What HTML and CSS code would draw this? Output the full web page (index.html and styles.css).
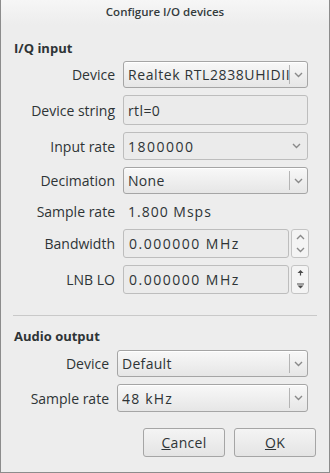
FILE: index.html
```html
<!DOCTYPE html>
<html>
<head>
<meta charset="utf-8">
<link rel="stylesheet" href="styles.css">
</head>
<body>
<div class="window">
  <div class="titlebar">Configure I/O devices</div>
  <div class="content">
    <div class="section-title">I/Q input</div>
    <div class="form iq">
      <label class="lbl">Device</label>
      <div class="combo h27"><span class="val wide">Realtek RTL2838UHIDII</span><span class="sep"></span><span class="arrow"><svg width="9" height="6" viewBox="0 0 9 6"><path d="M1 1 L4.5 4.5 L8 1" fill="none" stroke="#8a8a8a" stroke-width="1.4"/></svg></span></div>

      <label class="lbl">Device string</label>
      <div class="entry h30">rtl=0</div>

      <label class="lbl">Input rate</label>
      <div class="entry combo-edit h28"><span class="val digits">1800000</span><span class="arrow"><svg width="9" height="6" viewBox="0 0 9 6"><path d="M1 1 L4.5 4.5 L8 1" fill="none" stroke="#8a8a8a" stroke-width="1.4"/></svg></span></div>

      <label class="lbl">Decimation</label>
      <div class="combo h27"><span class="val">None</span><span class="sep"></span><span class="arrow"><svg width="9" height="6" viewBox="0 0 9 6"><path d="M1 1 L4.5 4.5 L8 1" fill="none" stroke="#8a8a8a" stroke-width="1.4"/></svg></span></div>

      <label class="lbl">Sample rate</label>
      <div class="plain">1.800 Msps</div>

      <label class="lbl">Bandwidth</label>
      <div class="spin h29"><div class="spin-entry digits">0.000000 MHz</div><div class="spin-btns"><span><svg width="9" height="6" viewBox="0 0 9 6"><path d="M1 5 L4.5 1.5 L8 5" fill="none" stroke="#8a8a8a" stroke-width="1.4"/></svg></span><span><svg width="9" height="6" viewBox="0 0 9 6"><path d="M1 1 L4.5 4.5 L8 1" fill="none" stroke="#8a8a8a" stroke-width="1.4"/></svg></span></div></div>

      <label class="lbl">LNB LO</label>
      <div class="spin h29"><div class="spin-entry digits">0.000000 MHz</div><div class="spin-btns"><span><svg width="9" height="7" viewBox="0 0 9 7"><path d="M1.5 4 L4.5 1 L7.5 4 Z" fill="#4a4a4a"/><path d="M4.5 2 V6.5" stroke="#4a4a4a" stroke-width="1.2"/></svg></span><span><svg width="9" height="7" viewBox="0 0 9 7"><path d="M1.5 2.5 L4.5 5.5 L7.5 2.5 Z" fill="#4a4a4a"/><path d="M1 1 H8" stroke="#4a4a4a" stroke-width="1"/></svg></span></div></div>
    </div>

    <div class="separator"></div>

    <div class="section-title">Audio output</div>
    <div class="form audio">
      <label class="lbl">Device</label>
      <div class="combo h27"><span class="val">Default</span><span class="sep"></span><span class="arrow"><svg width="9" height="6" viewBox="0 0 9 6"><path d="M1 1 L4.5 4.5 L8 1" fill="none" stroke="#8a8a8a" stroke-width="1.4"/></svg></span></div>

      <label class="lbl">Sample rate</label>
      <div class="combo h28"><span class="val digits">48 kHz</span><span class="sep"></span><span class="arrow"><svg width="9" height="6" viewBox="0 0 9 6"><path d="M1 1 L4.5 4.5 L8 1" fill="none" stroke="#8a8a8a" stroke-width="1.4"/></svg></span></div>
    </div>

    <div class="buttons">
      <button class="btn"><u>C</u>ancel</button>
      <button class="btn"><u>O</u>K</button>
    </div>
  </div>
</div>
</body>
</html>
```

FILE: styles.css
```css
* { box-sizing: border-box; }
html, body { margin: 0; padding: 0; }
body {
  width: 330px;
  height: 473px;
  font-family: "Open Sans", "DejaVu Sans", sans-serif;
  font-size: 14px;
  color: #2e3436;
  background: #ededed;
}
.window {
  width: 330px;
  height: 473px;
  border: 1px solid #8c8c8c;
  border-top: none;
  background: #ededed;
  display: flex;
  flex-direction: column;
}
.titlebar {
  height: 25px;
  background: linear-gradient(#f6f6f6, #ededed);
  text-align: center;
  font-size: 11.5px;
  font-weight: 600;
  line-height: 24px;
  color: #343b3d;
}
.content {
  padding: 14px 12px 0 12px;
  display: flex;
  flex-direction: column;
}
.section-title {
  font-weight: 700;
  font-size: 13px;
  line-height: 18px;
  padding-left: 1px;
}
.form {
  display: grid;
  column-gap: 8px;
  row-gap: 7px;
  align-items: center;
}
.form.iq {
  grid-template-columns: 102px 185px;
  margin-top: 4px;
}
.form.audio {
  grid-template-columns: 96px 191px;
  margin-top: 5px;
}
.lbl {
  text-align: right;
  white-space: nowrap;
}
.h27 { height: 27px; }
.h28 { height: 28px; }
.h29 { height: 29px; }
.h30 { height: 30px; }
.combo {
  display: flex;
  align-items: center;
  border: 1px solid #a5a5a5;
  border-radius: 3px;
  background: linear-gradient(#f8f8f8, #e6e6e6);
  box-shadow: inset 0 1px 0 #ffffff;
  padding-left: 4px;
  overflow: hidden;
}
.combo .val {
  flex: 1;
  white-space: nowrap;
  overflow: hidden;
  letter-spacing: 0.3px;
}
.combo .val.wide { letter-spacing: 0.6px; }
.combo .val.digits { letter-spacing: 1.2px; }
.combo .sep {
  width: 1px;
  align-self: stretch;
  margin: 3px 0;
  background: #b4b4b4;
}
.arrow {
  width: 17px;
  display: flex;
  justify-content: center;
  align-items: center;
}
.entry {
  display: flex;
  align-items: center;
  border: 1px solid #bdbdbd;
  border-radius: 3px;
  background: #ebebeb;
  padding-left: 4px;
  letter-spacing: 0.4px;
}
.combo-edit .val { flex: 1; }
.digits { letter-spacing: 1.5px; }
.combo-edit .arrow { width: 22px; }
.plain {
  padding-left: 5px;
  letter-spacing: 1px;
  line-height: 21px;
}
.spin {
  display: flex;
  width: 186px;
}
.spin-entry {
  flex: 1;
  display: flex;
  align-items: center;
  border: 1px solid #bdbdbd;
  border-radius: 3px;
  background: #ebebeb;
  padding-left: 5px;
}
.spin-btns {
  width: 18px;
  margin-left: 2px;
  display: flex;
  flex-direction: column;
  border: 1px solid #c4c4c4;
  border-radius: 3px;
  background: #f4f4f4;
}
.spin-btns span {
  flex: 1;
  display: flex;
  justify-content: center;
  align-items: center;
}
.separator {
  height: 1px;
  background: #c9c9c9;
  margin: 21px 0 11px 0;
}
.buttons {
  display: flex;
  justify-content: flex-end;
  gap: 9px;
  margin-top: 16px;
  padding-right: 1px;
}
.btn {
  width: 82px;
  height: 29px;
  border: 1px solid #a5a5a5;
  border-radius: 3px;
  background: linear-gradient(#f4f4f4, #e4e4e4);
  font-family: "Open Sans", "DejaVu Sans", sans-serif;
  font-size: 14px;
  color: #2e3436;
  letter-spacing: 0.3px;
  padding: 0;
}
```
